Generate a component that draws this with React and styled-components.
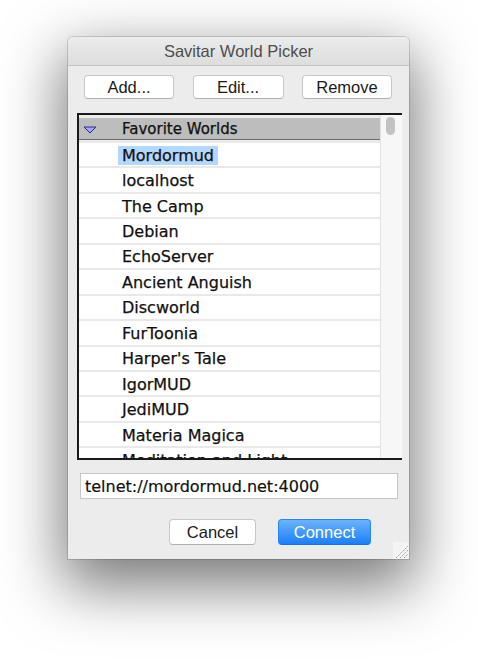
import styled, { createGlobalStyle } from "styled-components";

const GlobalStyle = createGlobalStyle`
  html, body {
    margin: 0;
    background: #ffffff;
  }
`;

const worlds = [
  "Mordormud",
  "localhost",
  "The Camp",
  "Debian",
  "EchoServer",
  "Ancient Anguish",
  "Discworld",
  "FurToonia",
  "Harper's Tale",
  "IgorMUD",
  "JediMUD",
  "Materia Magica",
  "Meditation and Light",
];

const Page = styled.div`
  height: 660px;
  box-sizing: border-box;
  padding: 37px 0 0 68px;
  overflow: hidden;
`;

const Window = styled.div`
  position: relative;
  width: 341px;
  height: 522px;
  display: flex;
  flex-direction: column;
  background: #ececec;
  border-radius: 5px 5px 0 0;
  box-shadow: 0 0 0 1px rgba(0, 0, 0, 0.14), 0 22px 60px 6px rgba(0, 0, 0, 0.52);
  font-family: "Liberation Sans", Arial, sans-serif;
`;

const TitleBar = styled.div`
  height: 28px;
  display: flex;
  align-items: center;
  justify-content: center;
  border-radius: 5px 5px 0 0;
  background: linear-gradient(#ececec, #dddddd);
  border-bottom: 1px solid #c3c3c3;
  color: #4d4d4d;
  font-size: 16.5px;
`;

const Toolbar = styled.div`
  display: flex;
  justify-content: space-between;
  padding: 9px 17px 0 16px;
`;

const PushButton = styled.button`
  width: ${(p) => p.$w}px;
  height: ${(p) => p.$h || 24}px;
  padding: 0;
  border-radius: 4px;
  font-family: "Liberation Sans", Arial, sans-serif;
  font-size: 16.5px;
  color: ${(p) => (p.$primary ? "#ffffff" : "#1a1a1a")};
  background: ${(p) =>
    p.$primary ? "linear-gradient(#6cb3fa, #1a7ffb)" : "#ffffff"};
  border: 1px solid ${(p) => (p.$primary ? "#2b86f5" : "#c8c8c8")};
  border-bottom-color: ${(p) => (p.$primary ? "#1e6fe0" : "#b0b0b0")};
`;

const ListBox = styled.div`
  margin: 14px 7px 0 9px;
  height: 347px;
  box-sizing: border-box;
  display: flex;
  overflow: hidden;
  border-top: 2px solid #1a1a1a;
  border-left: 2px solid #1a1a1a;
  border-bottom: 2px solid #1a1a1a;
  background: #ececec;
`;

const Outline = styled.div`
  flex: 1;
  padding-top: 3px;
  overflow: hidden;
  font-family: "DejaVu Sans", sans-serif;
  color: #111111;
  -webkit-text-stroke: 0.25px #111111;
`;

const GroupHeader = styled.div`
  height: 22px;
  display: flex;
  align-items: center;
  background: #bdbdbd;
  border-bottom: 1px solid #6b6b6b;
  margin-bottom: 1px;
  font-size: 15px;
  padding-top: 1px;
  box-sizing: border-box;
`;

const Disclosure = styled.svg`
  width: 14px;
  height: 8px;
  margin: 2px 25px 0 4px;
`;

const Row = styled.div`
  height: 25.45px;
  box-sizing: border-box;
  border-top: 2px solid #e9e9e9;
  background: #ffffff;
  display: flex;
  align-items: center;
  padding: 1px 0 0 39px;
  font-size: 16px;
`;

const Label = styled.span`
  padding: 0 4px;
  line-height: 19px;
  background: ${(p) => (p.$selected ? "#b3d7ff" : "transparent")};
`;

const ScrollTrack = styled.div`
  width: 21px;
  background: #f7f7f7;
  border-left: 1px solid #e2e2e2;
`;

const Thumb = styled.div`
  width: 9px;
  height: 18px;
  margin: 2px 0 0 5px;
  border-radius: 5px;
  background: #c2c2c2;
`;

const AddressField = styled.div`
  margin: 13px 11px 0 12px;
  height: 26px;
  box-sizing: border-box;
  display: flex;
  align-items: center;
  padding-left: 4px;
  background: #ffffff;
  border: 1px solid #c6c6c6;
  font-family: "DejaVu Sans", sans-serif;
  font-size: 16px;
  color: #111111;
  -webkit-text-stroke: 0.2px #111111;
`;

const Footer = styled.div`
  display: flex;
  justify-content: flex-end;
  gap: 22px;
  margin-top: 20px;
  padding-right: 38px;
`;

const Grip = styled.svg`
  position: absolute;
  right: 0;
  bottom: 0;
  width: 16px;
  height: 17px;
  background: #f4f4f4;
`;

export default function App() {
  return (
    <>
      <GlobalStyle />
      <Page>
        <Window>
          <TitleBar>Savitar World Picker</TitleBar>
          <Toolbar>
            <PushButton $w={90}>Add...</PushButton>
            <PushButton $w={91}>Edit...</PushButton>
            <PushButton $w={90}>Remove</PushButton>
          </Toolbar>
          <ListBox>
            <Outline>
              <GroupHeader>
                <Disclosure viewBox="0 0 14 8">
                  <path
                    d="M1 1 L13 1 L7 7 Z"
                    fill="#a7a4f2"
                    stroke="#2e2a8c"
                    strokeWidth="1"
                    strokeLinejoin="round"
                  />
                </Disclosure>
                Favorite Worlds
              </GroupHeader>
              {worlds.map((w, i) => (
                <Row key={w}>
                  <Label $selected={i === 0}>{w}</Label>
                </Row>
              ))}
            </Outline>
            <ScrollTrack>
              <Thumb />
            </ScrollTrack>
          </ListBox>
          <AddressField>telnet://mordormud.net:4000</AddressField>
          <Footer>
            <PushButton $w={87} $h={26}>
              Cancel
            </PushButton>
            <PushButton $w={93} $h={26} $primary>
              Connect
            </PushButton>
          </Footer>
          <Grip viewBox="0 0 16 17">
            <path
              d="M3 16 L15 4 M7 16 L15 8 M11 16 L15 12"
              stroke="#9a9a9a"
              strokeWidth="1"
              strokeDasharray="1.5 1"
            />
          </Grip>
        </Window>
      </Page>
    </>
  );
}
